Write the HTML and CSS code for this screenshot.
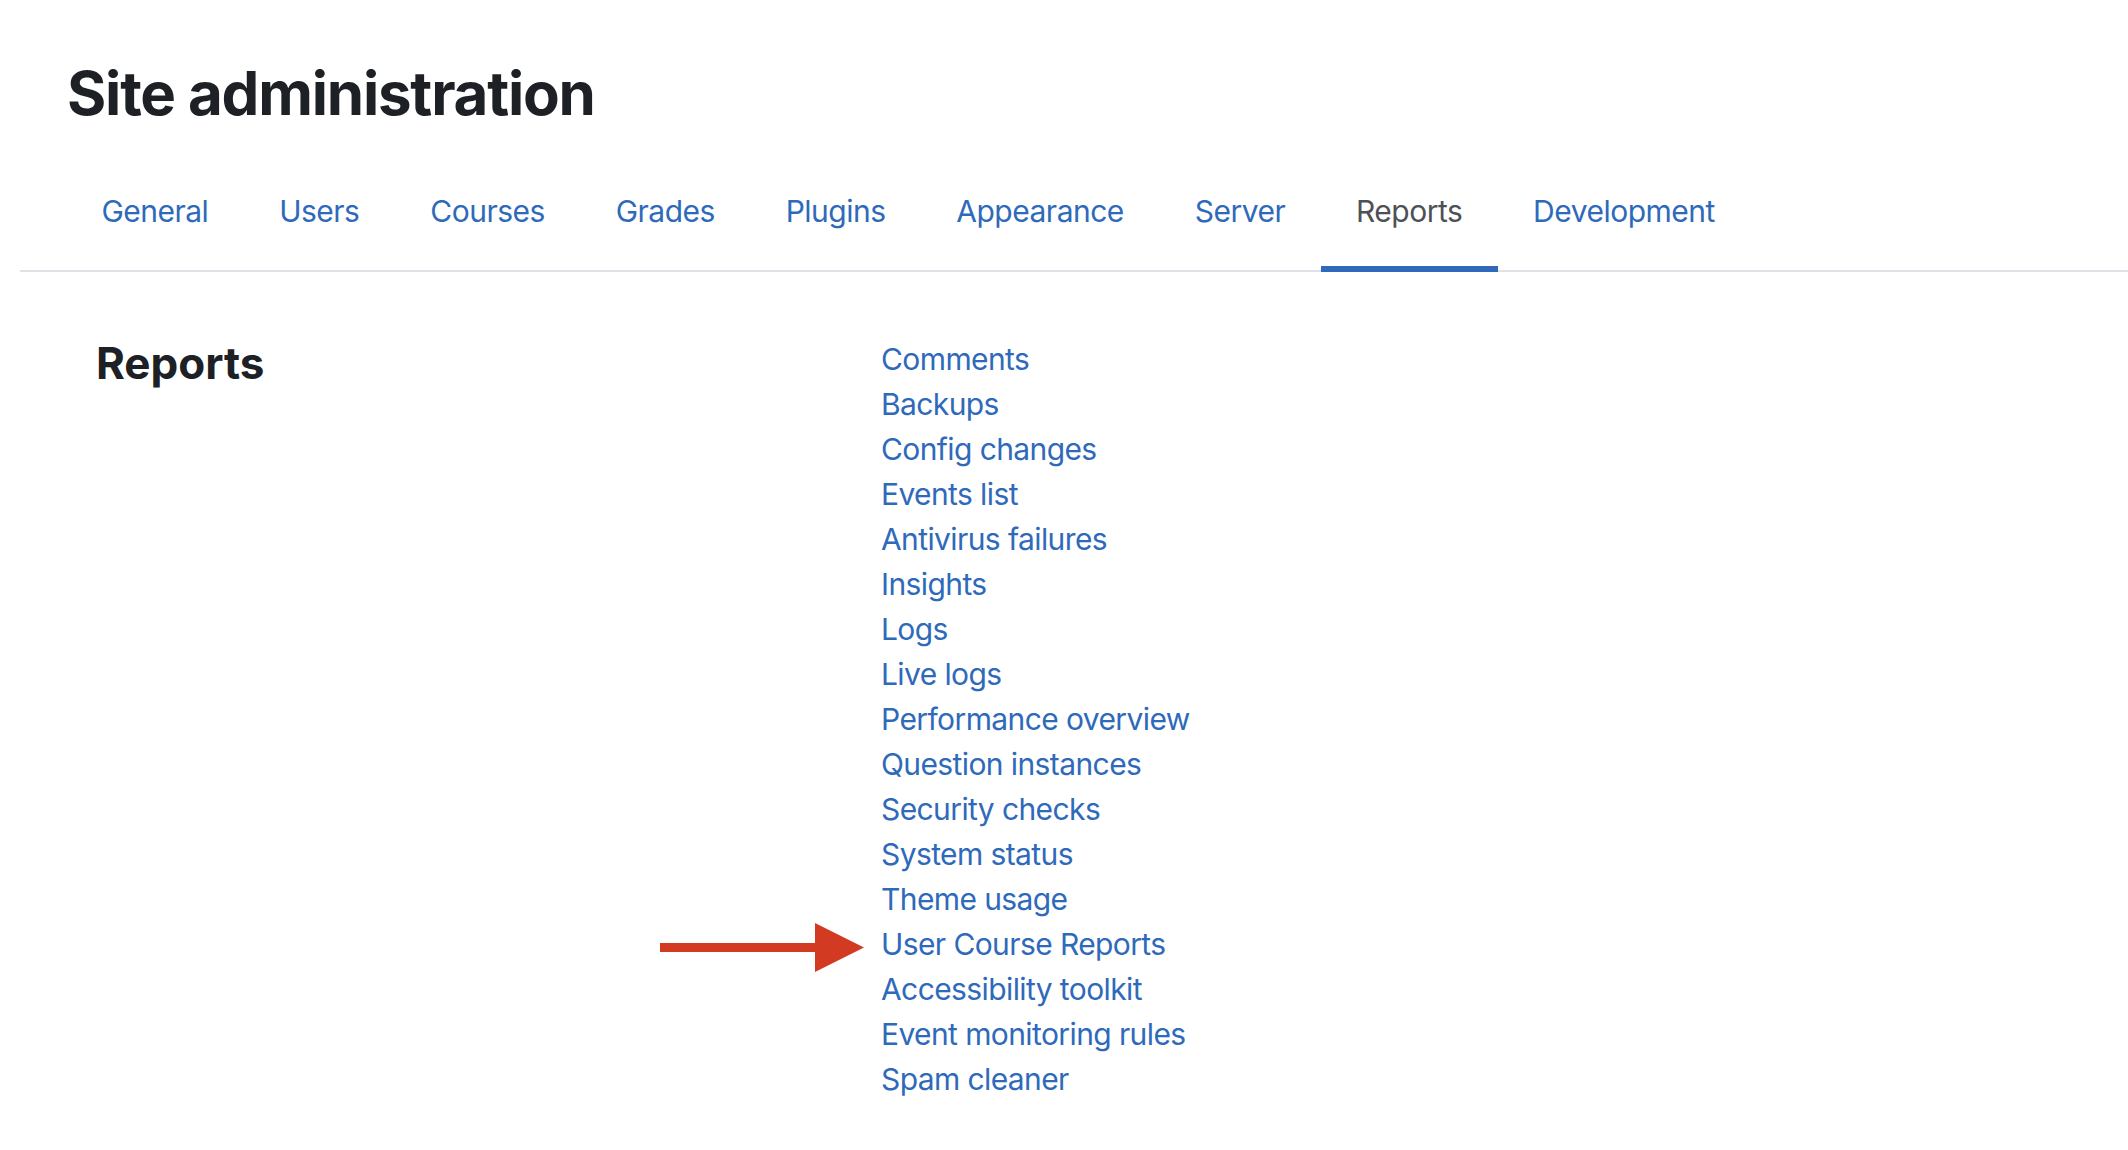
FILE: index.html
```html
<!DOCTYPE html>
<html lang="en">
<head>
<meta charset="utf-8">
<title>Site administration</title>
<link rel="stylesheet" href="styles.css">
</head>
<body>
<div class="page">
  <h1 class="page-title">Site administration</h1>
  <nav class="tabs">
    <ul class="tab-list">
      <li><a class="tab" href="#">General</a></li>
      <li><a class="tab" href="#">Users</a></li>
      <li><a class="tab" href="#">Courses</a></li>
      <li><a class="tab" href="#">Grades</a></li>
      <li><a class="tab" href="#">Plugins</a></li>
      <li><a class="tab" href="#">Appearance</a></li>
      <li><a class="tab" href="#">Server</a></li>
      <li><a class="tab active" href="#">Reports</a></li>
      <li><a class="tab" href="#">Development</a></li>
    </ul>
  </nav>
  <section class="category">
    <div class="category-head">
      <h2 class="category-title">Reports</h2>
    </div>
    <ul class="report-list">
      <li><a href="#">Comments</a></li>
      <li><a href="#">Backups</a></li>
      <li><a href="#">Config changes</a></li>
      <li><a href="#">Events list</a></li>
      <li><a href="#">Antivirus failures</a></li>
      <li><a href="#">Insights</a></li>
      <li><a href="#">Logs</a></li>
      <li><a href="#">Live logs</a></li>
      <li><a href="#">Performance overview</a></li>
      <li><a href="#">Question instances</a></li>
      <li><a href="#">Security checks</a></li>
      <li><a href="#">System status</a></li>
      <li><a href="#">Theme usage</a></li>
      <li class="highlighted">
        <svg class="pointer-arrow" width="205" height="49" viewBox="0 0 205 49" aria-hidden="true">
          <rect x="0" y="20" width="157" height="9" fill="#d23b21"/>
          <polygon points="155,0 155,49 204,24.5" fill="#d23b21"/>
        </svg>
        <a href="#">User Course Reports</a>
      </li>
      <li><a href="#">Accessibility toolkit</a></li>
      <li><a href="#">Event monitoring rules</a></li>
      <li><a href="#">Spam cleaner</a></li>
    </ul>
  </section>
</div>
</body>
</html>
```

FILE: styles.css
```css
html, body {
  margin: 0;
  padding: 0;
  background: #ffffff;
}

body {
  font-family: Inter, "Noto Sans", sans-serif;
  color: #1d2125;
}

.page {
  padding-left: 20px;
  padding-top: 57px;
}

.page-title {
  margin: 0 0 44px 0;
  padding-left: 47px;
  font-size: 60px;
  line-height: 72px;
  font-weight: 700;
  letter-spacing: -1.2px;
  color: #1d2125;
}

.tab-list {
  list-style: none;
  margin: 0;
  padding: 0 0 0 46px;
  display: flex;
  border-bottom: 2px solid #dee2e6;
}

.tab-list li {
  margin-bottom: -2px;
}

.tab {
  display: block;
  padding: 16px 35.4px 32px;
  font-size: 30px;
  line-height: 45px;
  letter-spacing: -0.5px;
  color: #2f6aba;
  text-decoration: none;
  border-bottom: 6px solid transparent;
}

.tab.active {
  color: #4d5156;
  border-bottom-color: #3068bb;
}

.category {
  display: flex;
  margin-top: 65px;
}

.category-head {
  width: 861px;
  flex: none;
  padding-left: 76px;
  box-sizing: border-box;
}

.category-title {
  margin: 0;
  font-size: 44px;
  line-height: 53px;
  font-weight: 700;
  color: #1d2125;
}

.report-list {
  list-style: none;
  margin: 0;
  padding: 0;
}

.report-list li {
  font-size: 30px;
  line-height: 45px;
  letter-spacing: -0.6px;
}

.report-list a {
  color: #2f6aba;
  text-decoration: none;
}

.highlighted {
  position: relative;
}

.pointer-arrow {
  position: absolute;
  right: calc(100% + 16px);
  top: 1px;
}
```
